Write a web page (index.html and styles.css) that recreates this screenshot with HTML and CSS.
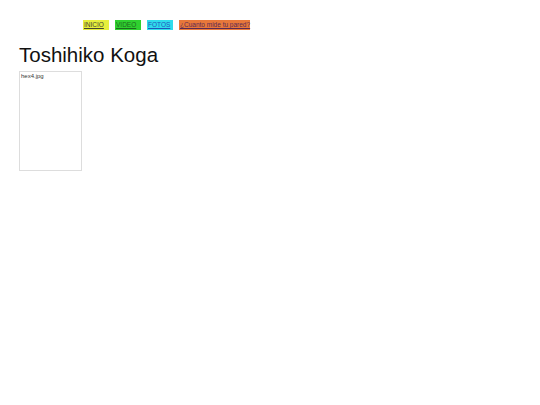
FILE: index.html
```html
<!DOCTYPE html>
<html lang="es">
<head>
<meta charset="utf-8">
<title>Toshihiko Koga</title>
<link rel="stylesheet" href="styles.css">
</head>
<body>
<div class="page">
  <nav class="nav">
    <a class="nav-item nav-yellow" href="#">INICIO</a>
    <a class="nav-item nav-green" href="#">VIDEO</a>
    <a class="nav-item nav-cyan" href="#">FOTOS</a>
    <a class="nav-item nav-orange" href="#">¿Cuanto mide tu pared?</a>
  </nav>
  <h1 class="title">Toshihiko Koga</h1>
  <div class="photo"><span class="alt">hex4.jpg</span></div>
</div>
</body>
</html>
```
FILE: styles.css
```css
html, body {
  margin: 0;
  padding: 0;
  background: #ffffff;
}
body {
  font-family: "Liberation Sans", Arial, sans-serif;
  color: #111111;
}
.page {
  padding: 20px 0 0 19px;
}
.nav {
  display: flex;
  gap: 6px;
  margin-left: 64px;
}
.nav-item {
  display: block;
  min-width: 26px;
  height: 10px;
  line-height: 10px;
  font-size: 6.5px;
  text-decoration: underline;
  padding-left: 1px;
  box-sizing: border-box;
  white-space: nowrap;
}
.nav-yellow { background: #e6ee3c; color: #444433; }
.nav-green { background: #2fd02f; color: #1d6a1d; }
.nav-cyan { background: #2fdcec; color: #2255bb; }
.nav-orange { background: #e8783a; color: #5a2a55; }
.title {
  margin: 13px 0 0 0;
  font-size: 20.5px;
  font-weight: normal;
  line-height: 24px;
  color: #111111;
}
.photo {
  margin-top: 4px;
  width: 61px;
  height: 98px;
  border: 1px solid #dddddd;
}
.alt {
  display: block;
  font-size: 6px;
  line-height: 8px;
  color: #333333;
  padding-left: 1px;
}
```
